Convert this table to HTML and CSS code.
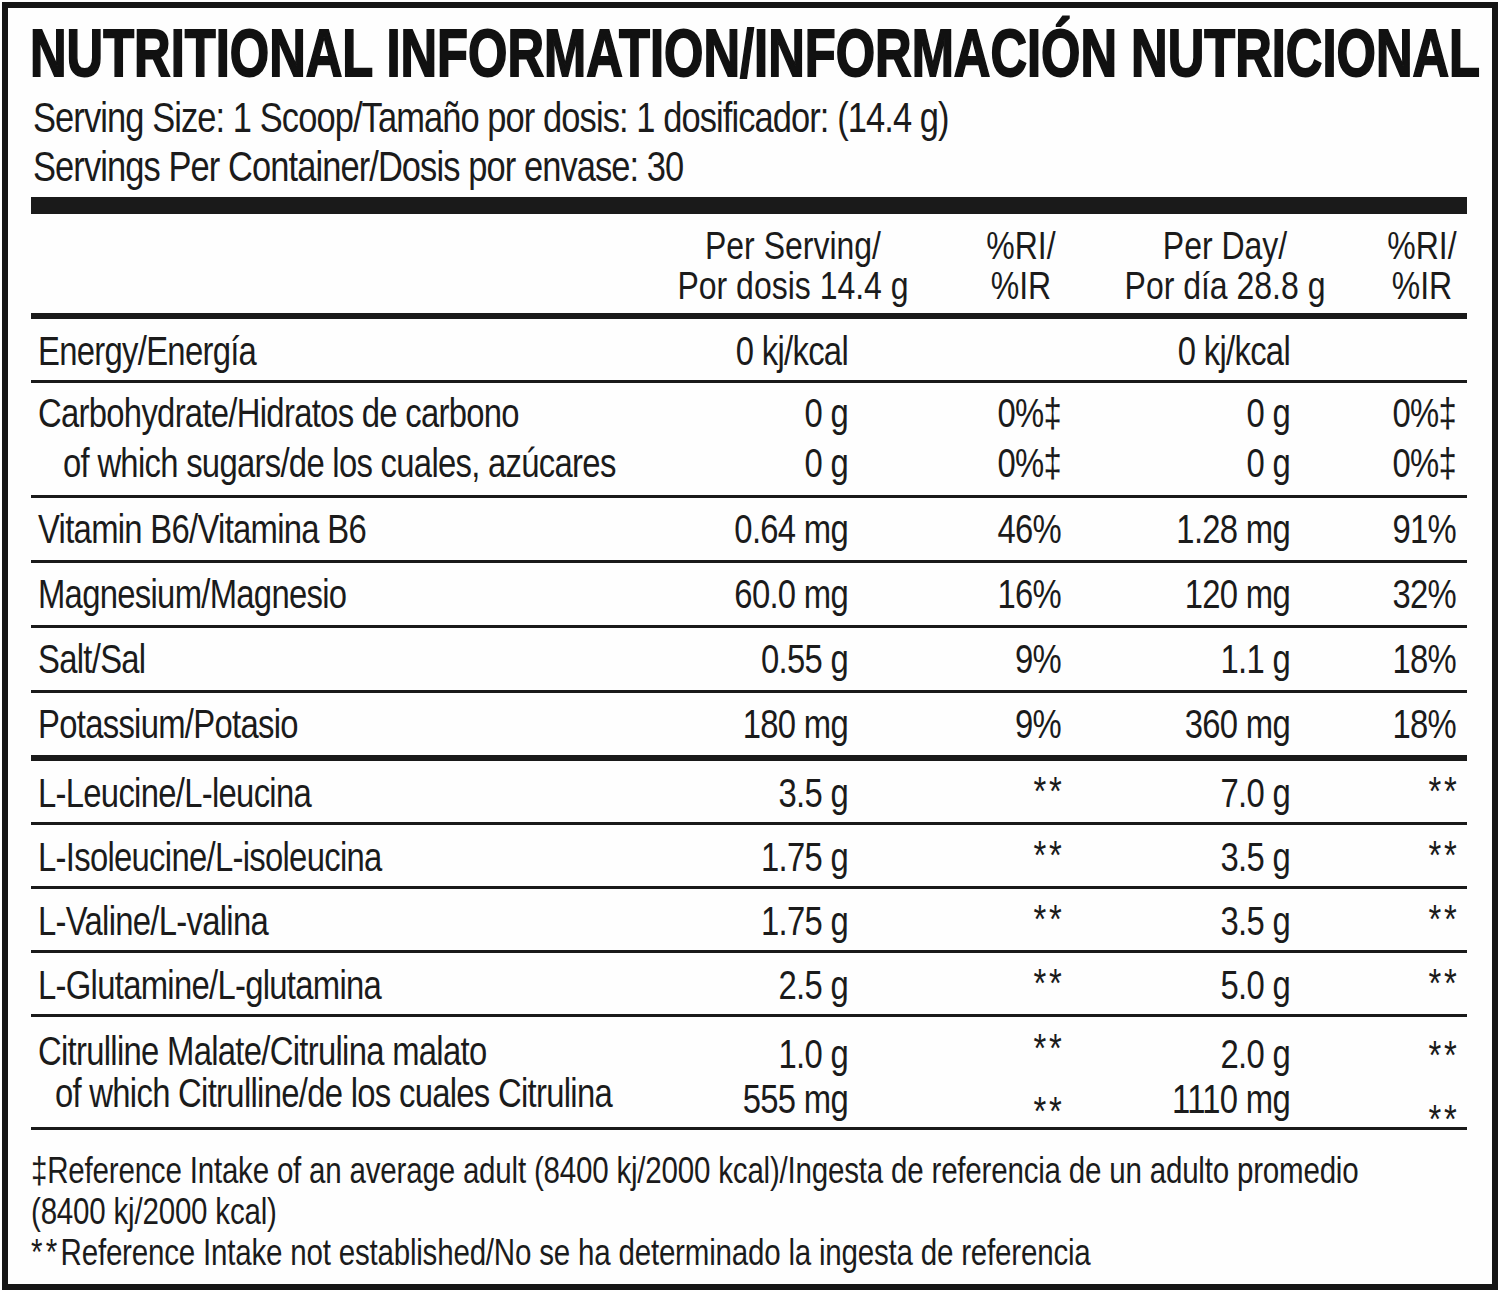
FILE: index.html
```html
<!DOCTYPE html>
<html lang="es">
<head>
<meta charset="utf-8">
<title>Nutritional Information</title>
<link rel="stylesheet" href="styles.css">
</head>
<body>
<div class="label">
  <h1 class="title">NUTRITIONAL INFORMATION/INFORMACIÓN NUTRICIONAL</h1>
  <div class="serving">
    <div>Serving Size: 1 Scoop/Tamaño por dosis: 1 dosificador: (14.4 g)</div>
    <div>Servings Per Container/Dosis por envase: 30</div>
  </div>
  <div class="bar"></div>

  <div class="head">
    <div></div>
    <div class="h">Per Serving/<br>Por dosis 14.4 g</div>
    <div class="h">%RI/<br>%IR</div>
    <div class="h">Per Day/<br>Por día 28.8 g</div>
    <div class="h h-last">%RI/<br>%IR</div>
  </div>

  <div class="row row-a">
    <div class="lab">Energy/Energía</div>
    <div class="num">0 kj/kcal</div>
    <div class="num"></div>
    <div class="num">0 kj/kcal</div>
    <div class="num"></div>
  </div>

  <div class="row row-b">
    <div class="lab"><div>Carbohydrate/Hidratos de carbono</div><div class="ind1">of which sugars/de los cuales, azúcares</div></div>
    <div class="num"><div>0 g</div><div>0 g</div></div>
    <div class="num"><div>0%‡</div><div>0%‡</div></div>
    <div class="num"><div>0 g</div><div>0 g</div></div>
    <div class="num"><div>0%‡</div><div>0%‡</div></div>
  </div>

  <div class="row">
    <div class="lab">Vitamin B6/Vitamina B6</div>
    <div class="num">0.64 mg</div>
    <div class="num">46%</div>
    <div class="num">1.28 mg</div>
    <div class="num">91%</div>
  </div>

  <div class="row">
    <div class="lab">Magnesium/Magnesio</div>
    <div class="num">60.0 mg</div>
    <div class="num">16%</div>
    <div class="num">120 mg</div>
    <div class="num">32%</div>
  </div>

  <div class="row">
    <div class="lab">Salt/Sal</div>
    <div class="num">0.55 g</div>
    <div class="num">9%</div>
    <div class="num">1.1 g</div>
    <div class="num">18%</div>
  </div>

  <div class="row row-sep">
    <div class="lab">Potassium/Potasio</div>
    <div class="num">180 mg</div>
    <div class="num">9%</div>
    <div class="num">360 mg</div>
    <div class="num">18%</div>
  </div>

  <div class="row row-c">
    <div class="lab">L-Leucine/L-leucina</div>
    <div class="num">3.5 g</div>
    <div class="num"><span class="ast"><span class="st1">*</span>*</span></div>
    <div class="num">7.0 g</div>
    <div class="num"><span class="ast"><span class="st1">*</span>*</span></div>
  </div>

  <div class="row row-c">
    <div class="lab">L-Isoleucine/L-isoleucina</div>
    <div class="num">1.75 g</div>
    <div class="num"><span class="ast"><span class="st1">*</span>*</span></div>
    <div class="num">3.5 g</div>
    <div class="num"><span class="ast"><span class="st1">*</span>*</span></div>
  </div>

  <div class="row row-c">
    <div class="lab">L-Valine/L-valina</div>
    <div class="num">1.75 g</div>
    <div class="num"><span class="ast"><span class="st1">*</span>*</span></div>
    <div class="num">3.5 g</div>
    <div class="num"><span class="ast"><span class="st1">*</span>*</span></div>
  </div>

  <div class="row row-c">
    <div class="lab">L-Glutamine/L-glutamina</div>
    <div class="num">2.5 g</div>
    <div class="num"><span class="ast"><span class="st1">*</span>*</span></div>
    <div class="num">5.0 g</div>
    <div class="num"><span class="ast"><span class="st1">*</span>*</span></div>
  </div>

  <div class="row row-d">
    <div class="lab"><div>Citrulline Malate/Citrulina malato</div><div class="ind2">of which Citrulline/de los cuales Citrulina</div></div>
    <div class="num val2"><div>1.0 g</div><div>555 mg</div></div>
    <div class="num stars stars-a"><div><span class="st1">*</span>*</div><div><span class="st1">*</span>*</div></div>
    <div class="num val2"><div>2.0 g</div><div>1110 mg</div></div>
    <div class="num stars stars-b"><div><span class="st1">*</span>*</div><div><span class="st1">*</span>*</div></div>
  </div>

  <div class="foot">
    <div>‡Reference Intake of an average adult (8400 kj/2000 kcal)/Ingesta de referencia de un adulto promedio<br>(8400 kj/2000 kcal)</div>
    <div><span class="ast-foot">**</span>Reference Intake not established/No se ha determinado la ingesta de referencia</div>
  </div>
</div>
</body>
</html>
```

FILE: styles.css
```css
/* Text blocks are set in Liberation Sans and condensed horizontally
   (scaleX 0.82) to get Helvetica-Condensed widths; the boxes
   themselves are laid out at their real size. */

html, body {
  margin: 0;
  padding: 0;
  background: #ffffff;
}

body {
  width: 1500px;
  height: 1294px;
  overflow: hidden;
  font-family: "Liberation Sans", Arial, sans-serif;
  color: #1b1b1b;
}

.label {
  margin: 2px;
  width: 1496px;
  box-sizing: border-box;
  border: 6px solid #151515;
  padding: 11px 25px 11px 23px;
  background: #fefefe;
}

.title {
  margin: 0 0 0 -1px;
  font-size: 67px;
  line-height: 67px;
  font-weight: 700;
  white-space: nowrap;
  color: #111111;
  -webkit-text-stroke: 1.8px #111111;
  transform: scaleX(0.756);
  transform-origin: 0 0;
}

.serving {
  margin: 7px 0 0 2px;
  font-size: 42px;
  line-height: 49px;
  letter-spacing: -1.1px;
  white-space: nowrap;
  transform: scaleX(0.82);
  transform-origin: 0 0;
}

.bar {
  margin-top: 6px;
  height: 17px;
  background: #1a1a1a;
}

.head {
  display: grid;
  grid-template-columns: 631px 262px 194px 214px 135px;
  padding: 12px 0 7px;
  border-bottom: 6px solid #1a1a1a;
  font-size: 39px;
  line-height: 40px;
  white-space: nowrap;
}

.h {
  display: flex;
  flex-direction: column;
  align-items: center;
  text-align: center;
  transform: scaleX(0.82);
  transform-origin: 50% 0;
}

.h-last {
  margin-left: 45px;
}

.row {
  display: grid;
  grid-template-columns: minmax(0, 1fr) 200px 213px 229px 166px;
  padding: 6px 11px 6px 0;
  border-bottom: 3px solid #1a1a1a;
  font-size: 40px;
  line-height: 50px;
  letter-spacing: -0.85px;
  white-space: nowrap;
}

.row > div {
  transform: scaleX(0.82);
}

.row-a {
  padding-top: 7px;
  padding-bottom: 4px;
}

.row-b {
  padding-top: 5px;
  padding-bottom: 7px;
}

.row-sep {
  border-bottom-width: 6px;
}

.row-c {
  padding-top: 7px;
  padding-bottom: 4px;
}

.row-d {
  padding-top: 0;
  padding-bottom: 0;
  height: 110px;
  align-items: start;
}

.lab {
  padding-left: 8.54px;
  transform-origin: 0 0;
}

.ind1 {
  padding-left: 30.5px;
}

.ind2 {
  padding-left: 20.7px;
}

.num {
  text-align: right;
  transform-origin: 100% 0;
}

.st1 {
  margin-right: 4px;
}

.ast {
  line-height: 0;
  vertical-align: 2px;
}

.row-d .lab {
  padding-top: 13px;
  line-height: 42px;
}

.val2 {
  padding-top: 15px;
  line-height: 45px;
}

.stars > div {
  line-height: 30px;
}

.stars-a {
  padding-top: 16px;
}

.stars-a > div + div {
  margin-top: 33px;
}

.stars-b {
  padding-top: 23px;
}

.stars-b > div + div {
  margin-top: 34px;
}

.foot {
  margin-top: 20px;
  font-size: 36px;
  line-height: 41px;
  letter-spacing: -0.24px;
  white-space: nowrap;
  transform: scaleX(0.82);
  transform-origin: 0 0;
}

.ast-foot {
  letter-spacing: 4px;
}
```
